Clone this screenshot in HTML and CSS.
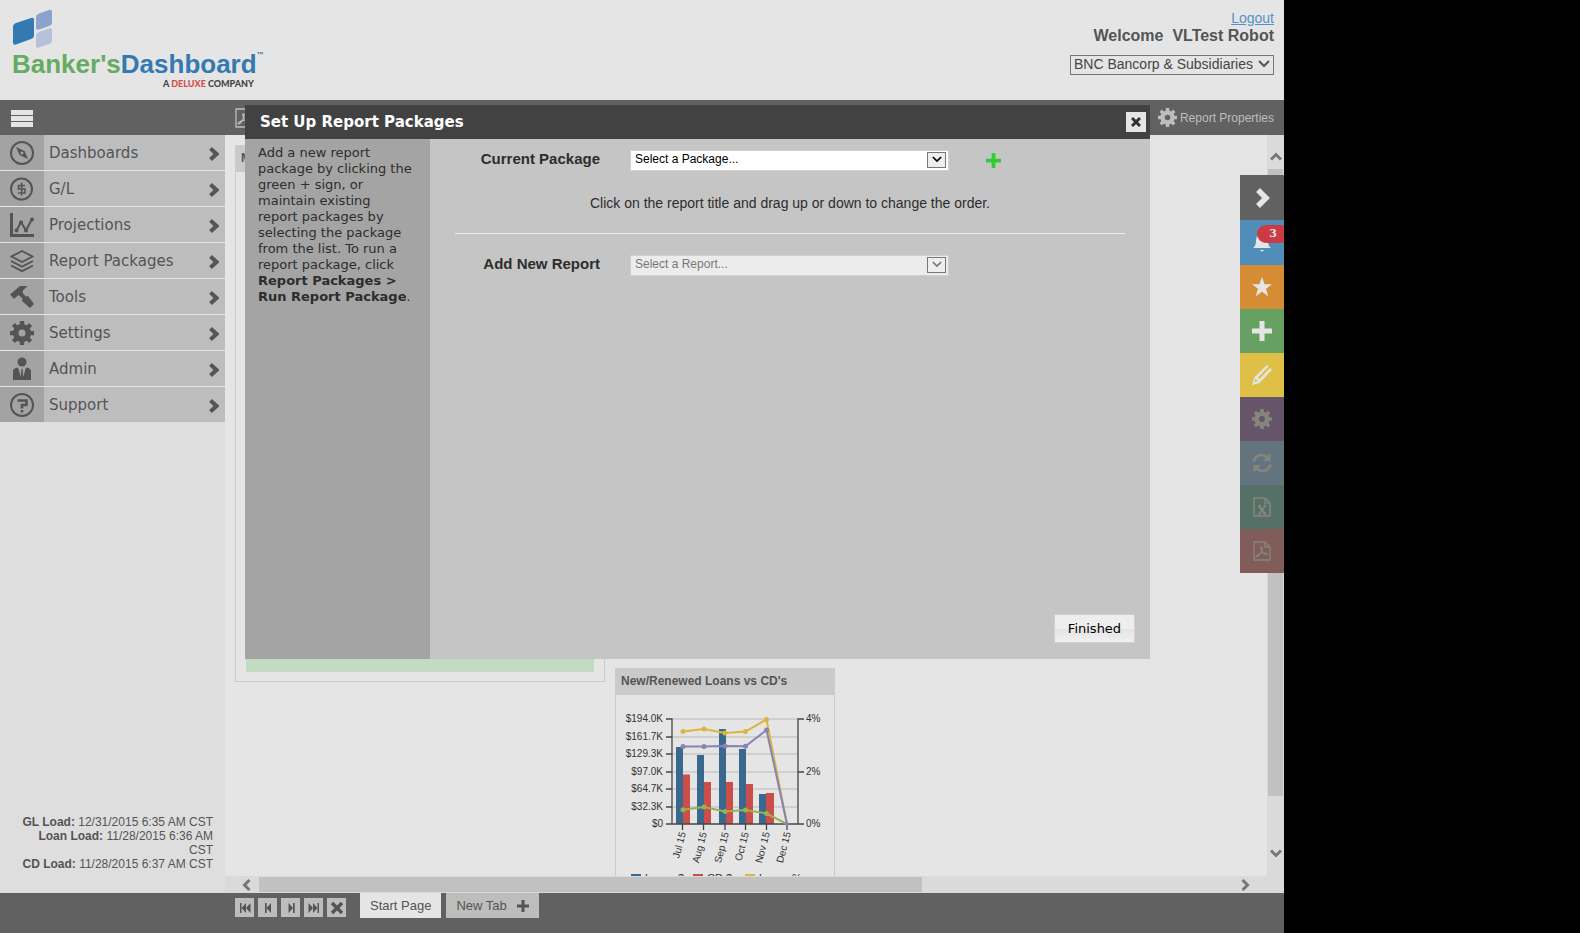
FILE: index.html
```html
<!DOCTYPE html>
<html lang="en">
<head>
<meta charset="utf-8">
<title>Banker's Dashboard</title>
<link rel="stylesheet" href="styles.css">
</head>
<body>
<svg class="defs" aria-hidden="true">
  <symbol id="chev" viewBox="0 0 10 14"><path d="M1.500 1.500 7.500 7l-6 5.500" fill="none" stroke="currentColor" stroke-width="4"/></symbol>
  <symbol id="gear" viewBox="0 0 24 24"><path fill="currentColor" fill-rule="evenodd" d="M9.800 0h4.400v3.200l2.600 1.100 2.300-2.300 3 3-2.300 2.300 1.100 2.600H24v4.300h-3.100l-1.100 2.600 2.300 2.300-3 3-2.300-2.300-2.600 1.100V24H9.800v-3.100l-2.600-1.100-2.300 2.300-3-3 2.300-2.300-1.100-2.600H0V9.900h3.100l1.100-2.600L1.900 5l3-3 2.300 2.300 2.600-1.100zM12 8.500a3.500 3.500 0 1 0 0 7 3.500 3.500 0 0 0 0-7z"/></symbol>
  <symbol id="down" viewBox="0 0 12 8"><path d="M1 1l5 5 5-5" fill="none" stroke="currentColor" stroke-width="2"/></symbol>
  <symbol id="pdf" viewBox="0 0 18 20"><path d="M1 1h11l5 5v13H1zM12 1v5h5" fill="none" stroke="currentColor" stroke-width="1.300"/><path d="M8 6c2-1 1 3 0 5s-3 5-4.500 5 1-2.500 4-3.300 6-.9 6.500.2-2 .5-3.500-1S7.500 8 8 6z" fill="none" stroke="currentColor" stroke-width="1.200"/></symbol>
  <symbol id="arrow" viewBox="0 0 12 10"><path d="M1 8.500 6 3.500l5 5" fill="none" stroke="currentColor" stroke-width="3"/></symbol>
  <symbol id="plus" viewBox="0 0 20 20"><path d="M7.500 0h5v7.500H20v5h-7.500V20h-5v-7.500H0v-5h7.500z" fill="currentColor"/></symbol>
</svg>
<div class="app">
  <header class="header">
    <div class="brand">
      <svg class="brand-mark" viewBox="0 0 41 40" aria-hidden="true">
        <path d="M4 14 19 9q3-1 3 2v15q0 3-3 4L4 35.500q-3 1-3-2V18q0-3 3-4z" fill="#337ab2"/>
        <path d="M27 4.500 37 1q3-1 3 2v10q0 3-3 4l-10 3.500q-3 1-3-2V8.500q0-3 3-4z" fill="#8ba2cb"/>
        <path d="M27 23 37 19.500q3-1 3 2v10q0 2.500-3 3.500l-10 3.500q-3 1-3-2V27q0-3 3-4z" fill="#b5c1db"/>
      </svg>
      <div class="brand-name"><span class="green">Banker's</span><span class="blue">Dashboard</span><sup>™</sup></div>
      <div class="brand-sub">A <span>DELUXE</span> COMPANY</div>
    </div>
    <div class="account">
      <a href="#">Logout</a>
      <strong>Welcome&nbsp; VLTest Robot</strong>
      <div class="picker">
        <select aria-label="Institution"><option>BNC Bancorp &amp; Subsidiaries</option></select>
        <svg><use href="#down"/></svg>
      </div>
    </div>
  </header>
  <div class="toolbar">
    <button class="burger" aria-label="Menu"><i></i><i></i><i></i></button>
    <button class="tool-pdf" aria-label="PDF"><svg><use href="#pdf"/></svg></button>
    <button class="props"><svg><use href="#gear"/></svg>Report Properties</button>
  </div>
  <div class="middle">
    <aside class="sidebar">
      <nav>
        <a href="#"><span class="ico"><svg viewBox="0 0 24 24"><circle cx="12" cy="12" r="11" fill="none" stroke="currentColor" stroke-width="2"/><path fill="currentColor" fill-rule="evenodd" d="M6 6l8.500 4L18 18l-8.500-4zM12 10.500a1.500 1.500 0 1 0 0 3 1.500 1.500 0 0 0 0-3z"/></svg></span><span class="lbl">Dashboards</span><svg class="go"><use href="#chev"/></svg></a>
        <a href="#"><span class="ico"><svg viewBox="0 0 24 24"><circle cx="11.500" cy="12" r="10.500" fill="none" stroke="currentColor" stroke-width="2"/><path fill="none" stroke="currentColor" stroke-width="1.600" d="M15 8.500H8.500V12H15v4H8M11.700 5.500v13"/></svg></span><span class="lbl">G/L</span><svg class="go"><use href="#chev"/></svg></a>
        <a href="#"><span class="ico"><svg viewBox="0 0 24 24"><path d="M1.500 0v22.500H24" fill="none" stroke="currentColor" stroke-width="3"/><path d="M6.500 17.500 11 9l5 8.500L21.500 7" fill="none" stroke="currentColor" stroke-width="2"/><g fill="currentColor"><circle cx="6.500" cy="17.500" r="2"/><circle cx="11" cy="9.500" r="2"/><circle cx="16" cy="17.500" r="2"/><circle cx="22" cy="6.500" r="2"/></g></svg></span><span class="lbl">Projections</span><svg class="go"><use href="#chev"/></svg></a>
        <a href="#"><span class="ico"><svg viewBox="0 0 24 24"><g fill="none" stroke="currentColor" stroke-width="1.900"><path d="M12 2l10.500 5.500L12 13 1.500 7.500z"/><path d="M1 12l11 5.700L23 12M1 16.500l11 5.700 11-5.700"/></g></svg></span><span class="lbl">Report Packages</span><svg class="go"><use href="#chev"/></svg></a>
        <a href="#"><span class="ico"><svg viewBox="0 0 24 24"><path fill="currentColor" d="M0 9.500 10 1h7.500l-5 5 .5 2.500 3 3 2-.5 6 8-4 4-8-7 .5-2.500-4-3.500-4.500 4z"/></svg></span><span class="lbl">Tools</span><svg class="go"><use href="#chev"/></svg></a>
        <a href="#"><span class="ico"><svg><use href="#gear"/></svg></span><span class="lbl">Settings</span><svg class="go"><use href="#chev"/></svg></a>
        <a href="#"><span class="ico"><svg viewBox="0 0 24 24"><circle cx="12" cy="5" r="4.500" fill="currentColor"/><path fill="currentColor" d="M3 23V14q0-3 5-3.500L10.800 20l.6-8h1.200l.6 8L16 10.500q5 .5 5 3.500v9z"/></svg></span><span class="lbl">Admin</span><svg class="go"><use href="#chev"/></svg></a>
        <a href="#"><span class="ico"><svg viewBox="0 0 24 24"><circle cx="12" cy="12" r="11" fill="none" stroke="currentColor" stroke-width="2"/><path fill="none" stroke="currentColor" stroke-width="2.600" d="M7.500 7.500h9V12H12v3.500M12 17v2.600"/></svg></span><span class="lbl">Support</span><svg class="go"><use href="#chev"/></svg></a>
      </nav>
      <div class="loads">
        <div><b>GL Load:</b> 12/31/2015 6:35 AM CST</div>
        <div><b>Loan Load:</b> 11/28/2015 6:36 AM CST</div>
        <div><b>CD Load:</b> 11/28/2015 6:37 AM CST</div>
      </div>
    </aside>
    <main class="stage">
      <div class="board">
        <section class="widget tall"><h2>M</h2><div class="green-row"></div></section>
        <section class="widget chart">
          <h2>New/Renewed Loans vs CD's</h2>
          <svg viewBox="0 0 218 200" width="218" height="200">
            <path d="M56 24H182M56 42H182M56 59H182M56 77H182M56 94H182M56 112H182" stroke="#c8c8c8" stroke-width="1.500"/>
            <g fill="#39688f"><path d="M60 52h7v77h-7zM81 60h7v69h-7zM103 34h7v95h-7zM123 54h7v75h-7zM143 99h7v30h-7z"/></g>
            <g fill="#cb4f48"><path d="M67 79.500h7V129h-7zM88 87h7v42h-7zM110 87h7v42h-7zM130 89h7v40h-7zM150 98h8v31h-8z"/></g>
            <path d="M50 24h6v105h-6M50 42h6M50 59h6M50 77h6M50 94h6M50 112h6M56 129H182M188 24h-6v105h6M182 77h6M66.500 129v6M87.500 129v6M109 129v6M129.500 129v6M150.500 129v6M171 129v6" fill="none" stroke="#454545" stroke-width="1.300"/>
            <g fill="none" stroke-width="2">
              <path d="M67 36.500 88 34l21 4 20.500-1.500L150.500 24.500 171 129" stroke="#dab53f"/>
              <path d="M67 51.500h21l21-.5 20.500.3L150.500 35 171 129" stroke="#8983b5"/>
              <path d="M67 114.700 88 112l21 4.500 20.500-1.500 21 3.500L171 129" stroke="#9cae56"/>
            </g>
            <g fill="#dab53f"><circle cx="67" cy="36.500" r="2.500"/><circle cx="88" cy="34" r="2.500"/><circle cx="109" cy="38" r="2.500"/><circle cx="129.500" cy="36.500" r="2.500"/><circle cx="150.500" cy="24.500" r="2.500"/></g>
            <g fill="#8983b5"><circle cx="67" cy="51.500" r="2.500"/><circle cx="88" cy="51.500" r="2.500"/><circle cx="109" cy="51" r="2.500"/><circle cx="129.500" cy="51.300" r="2.500"/><circle cx="150.500" cy="35" r="2.500"/><circle cx="171" cy="129" r="2"/></g>
            <g fill="#9cae56"><circle cx="67" cy="114.700" r="2.500"/><circle cx="88" cy="112" r="2.500"/><circle cx="109" cy="116.500" r="2.500"/><circle cx="129.500" cy="115" r="2.500"/><circle cx="150.500" cy="118.500" r="2.500"/></g>
            <g class="axis" text-anchor="end"><text x="47" y="27">$194.0K</text><text x="47" y="45">$161.7K</text><text x="47" y="62">$129.3K</text><text x="47" y="80">$97.0K</text><text x="47" y="97">$64.7K</text><text x="47" y="115">$32.3K</text><text x="47" y="132">$0</text>
              <text transform="translate(70 138) rotate(-75)">Jul 15</text><text transform="translate(91 138) rotate(-75)">Aug 15</text><text transform="translate(113 138) rotate(-75)">Sep 15</text><text transform="translate(133 138) rotate(-75)">Oct 15</text><text transform="translate(154 138) rotate(-75)">Nov 15</text><text transform="translate(175 138) rotate(-75)">Dec 15</text></g>
            <g class="axis"><text x="190" y="27">4%</text><text x="190" y="80">2%</text><text x="190" y="132">0%</text></g>
            <path d="M15 179h10v10H15z" fill="#39688f"/><path d="M77 179h10v10H77z" fill="#cb4f48"/><path d="M129 179h10v10h-10z" fill="#dab53f"/>
            <g class="legend"><text x="29" y="187">Loans $</text><text x="91" y="187">CD $</text><text x="143" y="187">Loans %</text></g>
          </svg>
        </section>
      </div>
      <div class="vbar"><svg><use href="#arrow"/></svg><div class="vthumb"></div><svg class="flip"><use href="#arrow"/></svg></div>
      <div class="hbar"><svg class="left"><use href="#arrow"/></svg><div class="hthumb"></div><svg class="right"><use href="#arrow"/></svg></div>
    </main>
  </div>
  <footer class="footer">
    <div class="pager">
      <button aria-label="First"><svg viewBox="0 0 12 10"><path fill="currentColor" d="M1 0h1.500v10H1zM7 0v10L2.500 5zM11.500 0v10L7 5z"/></svg></button>
      <button aria-label="Previous"><svg viewBox="0 0 12 10"><path fill="currentColor" d="M3 0h1.700v10H3zM9 0v10L4.500 5z"/></svg></button>
      <button aria-label="Next"><svg viewBox="0 0 12 10"><path fill="currentColor" d="M8 0h1.700v10H8zM3.500 0v10L8 5z"/></svg></button>
      <button aria-label="Last"><svg viewBox="0 0 12 10"><path fill="currentColor" d="M9.500 0H11v10H9.500zM5 0v10l4.500-5zM.5 0v10L5 5z"/></svg></button>
      <button class="x" aria-label="Close tab"><svg viewBox="0 0 14 14"><path d="M2 2l10 10M12 2 2 12" stroke="currentColor" stroke-width="3.500"/></svg></button>
    </div>
    <button class="tab on">Start Page</button>
    <button class="tab">New Tab <svg><use href="#plus"/></svg></button>
  </footer>

  <div class="rail">
    <button class="r-grey" aria-label="Collapse"><svg viewBox="0 0 20 20"><path d="M6 2l8 8-8 8" fill="none" stroke="currentColor" stroke-width="5.500"/></svg></button>
    <button class="r-blue" aria-label="Alerts"><svg viewBox="0 0 20 20"><path d="M10 0q6 1 6 8 0 5 3 7H1q3-2 3-7 0-7 6-8zM8 17h4q-2 3-4 0z" fill="currentColor"/></svg><span class="badge">3</span></button>
    <button class="r-orange" aria-label="Favorites"><svg viewBox="0 0 20 20"><path d="M10 0l2.600 7.200H20l-6 4.500 2.300 7.600L10 14.800l-6.300 4.500L6 11.700 0 7.200h7.400z" fill="currentColor"/></svg></button>
    <button class="r-green" aria-label="Add"><svg><use href="#plus"/></svg></button>
    <button class="r-yellow" aria-label="Edit"><svg viewBox="0 0 20 20"><path d="M0 20l2.500-8L4 10.800 15 0l1.500 1.300L6 12.500l1.500 1.500L18 3l1.800 1.800L9 16.500 7.500 18zM3.500 13.500l-1 3.500 3.500-1z" fill="currentColor" fill-rule="evenodd"/><path d="M5 11.500 16.500 1" stroke="currentColor"/></svg></button>
    <button class="r-purple" aria-label="Settings"><svg><use href="#gear"/></svg></button>
    <button class="r-slate" aria-label="Refresh"><svg viewBox="0 0 20 20"><path d="M1.500 8.500Q3.500 2 9.500 2q4 0 6.500 3.500M18.500 11.500Q16.500 18 10.500 18q-4 0-6.500-3.500" fill="none" stroke="currentColor" stroke-width="2.600"/><path d="M18.500 0v8H11zM1.500 20v-8H9z" fill="currentColor"/></svg></button>
    <button class="r-teal" aria-label="Excel"><svg viewBox="0 0 18 20"><path d="M1 1h11l5 5v13H1zM12 1v5h5" fill="none" stroke="currentColor" stroke-width="1.500"/><path d="M6 9l6 8" stroke="currentColor" stroke-width="2.600"/><path d="M12 9l-6 8M5 8.500h3M10.500 8.500h3M5 17h3M10.500 17h3" stroke="currentColor" stroke-width="1.500"/></svg></button>
    <button class="r-red" aria-label="PDF export"><svg><use href="#pdf"/></svg></button>
  </div>

  <div class="modal" role="dialog" aria-labelledby="mt">
    <div class="modal-head"><h1 id="mt">Set Up Report Packages</h1><button class="close" aria-label="Close"><svg viewBox="0 0 10 10"><path d="M1 1l8 8M9 1 1 9" stroke="currentColor" stroke-width="3"/></svg></button></div>
    <div class="modal-main">
      <p class="help">Add a new report package by clicking the green + sign, or maintain existing<br>report packages by selecting the package from the list. To run a report package, click <b>Report Packages &gt; Run Report Package</b>.</p>
      <form class="form">
        <div class="row">
          <label for="pkg">Current Package</label>
          <div class="combo"><select id="pkg"><option>Select a Package...</option></select><span><svg><use href="#down"/></svg></span></div>
          <button type="button" class="add" aria-label="Add package"><svg><use href="#plus"/></svg></button>
        </div>
        <p class="hint">Click on the report title and drag up or down to change the order.</p>
        <hr>
        <div class="row">
          <label for="rep">Add New Report</label>
          <div class="combo off"><select id="rep" disabled><option>Select a Report...</option></select><span><svg><use href="#down"/></svg></span></div>
        </div>
        <button type="button" class="finish">Finished</button>
      </form>
    </div>
  </div>
</div>
</body>
</html>
```
FILE: styles.css
```css
* { box-sizing: border-box; }
body { margin: 0; background: #000; color: #545454; font-family: "Liberation Sans", Arial, sans-serif; font-size: 12px; }
button, select { font: inherit; color: inherit; margin: 0; padding: 0; border: 0; background: none; border-radius: 0; }
select { appearance: none; }
svg { display: block; flex: none; }
h1, h2, p { margin: 0; }
.defs { position: absolute; width: 0; height: 0; }
.app { position: relative; width: calc(100% - 296px); min-height: 100vh; display: flex; flex-direction: column; background: #e5e5e5; overflow: hidden; }

.header { min-height: 100px; display: flex; justify-content: space-between; padding: 9px 10px 0 12px; }
.brand { width: 250px; }
.brand-mark { width: 41px; height: 40px; }
.brand-name { font: bold 26px/30px "Liberation Sans", Arial, sans-serif; white-space: nowrap; display: flex; }
.brand-name sup { font-size: 7px; line-height: 12px; color: #337ab2; }
.green { color: #66ab62; }
.blue { color: #337ab2; }
.brand-sub { font: 900 9px/10px Lato, sans-serif; text-align: right; padding-right: 8px; color: #444; }
.brand-sub span { color: #d2504b; }
.account { display: flex; flex-direction: column; align-items: flex-end; }
.account a { color: #5590c4; font-size: 14px; line-height: 18px; }
.account strong { font-size: 16px; line-height: 18px; }
.picker { position: relative; margin-top: 10px; }
.picker select { width: 204px; height: 20px; border: 1px solid #777; padding: 0 0 2px 3px; font-size: 14px; line-height: 16px; color: #444; }
.picker svg { position: absolute; right: 4px; top: 5px; width: 12px; height: 8px; pointer-events: none; }

.toolbar { height: 35px; background: #616161; display: flex; align-items: center; padding: 0 10px 0 11px; color: #bdbdbd; }
.burger { width: 22px; display: grid; gap: 1px; padding-top: 2px; }
.burger i { height: 5px; background: #e5e5e5; }
.tool-pdf { margin-left: 202px; }
.tool-pdf svg { width: 18px; height: 20px; }
.props { margin-left: auto; display: flex; align-items: center; gap: 3px; line-height: 14px; }
.props svg { width: 19px; height: 19px; }

.middle { flex: 1; display: flex; min-height: 0; }
.sidebar { width: 225px; background: #dedede; display: flex; flex-direction: column; justify-content: space-between; }
nav { display: grid; gap: 1px; background: #e5e5e5; }
nav a { display: flex; align-items: center; height: 35px; background: #bdbdbd; color: #545454; text-decoration: none; font: 15px/20px "DejaVu Sans", Verdana, sans-serif; padding-right: 6px; }
.ico { width: 44px; height: 35px; display: grid; place-items: center; background: #a3a3a3; margin-right: 5px; }
.ico svg { width: 24px; height: 24px; }
.lbl { flex: 1; }
.go { width: 10px; height: 14px; margin-top: 3px; }
.loads { text-align: right; line-height: 14px; padding: 0 12px 22px; }

.stage { flex: 1; min-width: 0; display: grid; grid-template: minmax(0, 1fr) 17px / minmax(0, 1fr) 17px; }
.board { display: flex; align-items: flex-start; gap: 10px; padding: 10px; overflow: hidden; height: 741px; }
.widget { border: 1px solid #cbcbcb; flex: none; }
.widget h2 { background: #cacaca; font-size: 12px; line-height: 16px; padding: 4px 5px 6px; }
.tall { width: 370px; height: 537px; display: flex; flex-direction: column; justify-content: space-between; }
.green-row { height: 20px; margin: 10px 10px 9px; background: #c3dbc2; }
.chart { width: 220px; margin-top: 523px; }
.axis, .legend { font-size: 10px; fill: #333; }
.legend { font-size: 11px; }
.vbar { background: #dadada; display: flex; flex-direction: column; align-items: center; padding: 16px 1px; color: #777; }
.vthumb { width: 15px; height: 627px; margin-top: 8px; background: #c1c1c1; }
.vbar svg, .hbar svg { width: 12px; height: 10px; }
.flip { transform: rotate(180deg); margin-top: 53px; }
.hbar { grid-column: 1 / -1; background: #dadada; display: flex; align-items: center; color: #777; padding: 1px 32px 1px 15px; }
.hthumb { width: 663px; height: 15px; margin-left: 7px; background: #c1c1c1; }
.left { transform: rotate(-90deg); }
.right { transform: rotate(90deg); margin-left: auto; }

.footer { height: 40px; background: #616161; display: flex; align-items: flex-start; gap: 5px; padding-left: 235px; }
.pager { display: flex; gap: 4px; margin: 5px 9px 0 0; }
.pager button { width: 19px; height: 19px; background: #bdbdbd; display: grid; place-items: center; }
.pager svg { width: 12px; height: 10px; }
.pager .x svg { width: 14px; height: 14px; }
.tab { height: 25px; padding: 0 10px; background: #bdbdbd; font-size: 13px; display: flex; align-items: center; gap: 10px; }
.tab svg { width: 12px; height: 12px; }
.on { background: #e5e5e5; }

.rail { position: absolute; right: 0; top: 175px; width: 44px; display: grid; color: #e5e5e5; overflow: hidden; }
.rail button { position: relative; height: 44px; display: grid; place-items: center; }
.rail svg { width: 20px; height: 20px; }
.rail .r-grey, .rail .r-blue { height: 45px; }
.r-grey { background: #616161; }
.r-blue { background: #508db8; }
.r-orange { background: #d58c35; }
.r-green { background: #66a163; }
.r-yellow { background: #dec046; }
.r-purple { background: #66546a; color: #85857d; }
.r-slate { background: #64747f; color: #85857d; }
.r-teal { background: #557067; color: #85857d; }
.r-red { background: #805d59; color: #85857d; }
.badge { position: absolute; left: 17px; top: 5px; width: 32px; height: 18px; border-radius: 9px; background: #cc3b43; font: bold 11px/18px "DejaVu Serif", serif; text-align: center; }

.modal { position: absolute; left: 245px; right: 134px; top: 105px; min-height: 554px; display: flex; flex-direction: column; background: #c5c5c5; color: #2d2d2d; }
.modal-head { height: 34px; background: #424242; color: #fff; display: flex; align-items: center; justify-content: space-between; padding: 0 4px 0 15px; }
.modal-head h1 { font: bold 15px/20px "DejaVu Sans", Verdana, sans-serif; }
.close { width: 20px; height: 20px; background: #e5e5e5; color: #333; display: grid; place-items: center; }
.close svg { width: 10px; height: 10px; }
.modal-main { flex: 1; display: flex; }
.help { width: 185px; padding: 6px 12px 6px 13px; background: #a4a4a4; font: 13px/16px "DejaVu Sans", Verdana, sans-serif; }
.form { flex: 1; display: flex; flex-direction: column; padding: 10px 15px 16px 25px; }
.row { display: flex; align-items: center; height: 22px; }
.row label { width: 145px; text-align: right; font-size: 15px; line-height: 18px; font-weight: bold; margin-right: 30px; padding-bottom: 2px; }
.combo { position: relative; }
.combo select { width: 319px; height: 21px; border: 1px solid #d0d0d0; background: #fff; color: #000; padding: 0 4px 2px; font-size: 12px; }
.combo span { position: absolute; right: 3px; top: 2px; width: 19px; height: 16px; border: 1px solid #777; background: #eee; color: #000; display: grid; place-items: center; pointer-events: none; }
.combo svg { width: 10px; height: 7px; }
.combo.off select { background: #ececec; color: #777; opacity: 1; }
.combo.off span { color: #777; }
.add { margin-left: 37px; color: #32cd32; }
.add svg { width: 15px; height: 15px; }
.hint { font-size: 14px; line-height: 16px; text-align: center; margin: 24px 10px 22px 0; }
hr { width: calc(100% - 10px); margin: 0 0 20px; border: 0; border-top: 1px solid #eee; }
.finish { margin: auto 0 0 auto; width: 81px; height: 29px; border: 1px solid #d0d0d0; background: linear-gradient(#eee 50%, #e4e4e4 50%, #f0f0f0); color: #000; font: 13px/20px "DejaVu Sans", Verdana, sans-serif; }
```
